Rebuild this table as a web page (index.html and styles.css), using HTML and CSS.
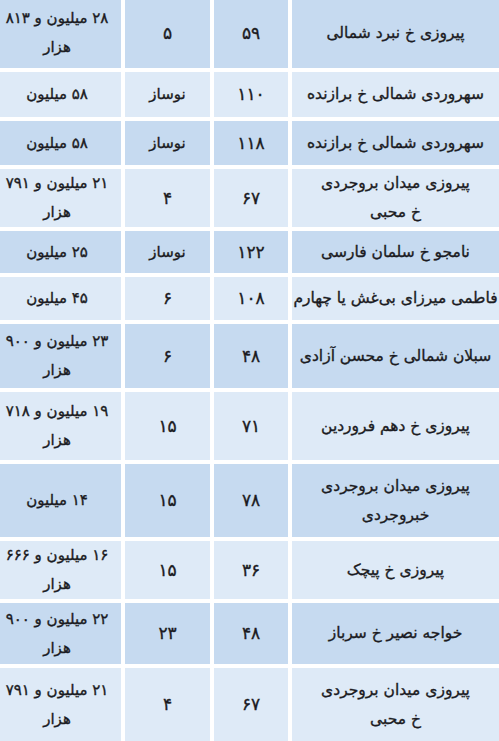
FILE: index.html
```html
<!DOCTYPE html>
<html lang="fa">
<head>
<meta charset="utf-8">
<title>جدول</title>
<link rel="stylesheet" href="styles.css">
</head>
<body>
<div class="table">
  <div class="cell addr dark">پیروزی خ نبرد شمالی</div><div class="cell num dark">۵۹</div><div class="cell num dark">۵</div><div class="cell dark">۲۸ میلیون و ۸۱۳<br>هزار</div>
  <div class="cell addr light">سهروردی شمالی خ برازنده</div><div class="cell num light">۱۱۰</div><div class="cell light">نوساز</div><div class="cell light">۵۸ میلیون</div>
  <div class="cell addr dark">سهروردی شمالی خ برازنده</div><div class="cell num dark">۱۱۸</div><div class="cell dark">نوساز</div><div class="cell dark">۵۸ میلیون</div>
  <div class="cell addr light">پیروزی میدان بروجردی<br>خ محبی</div><div class="cell num light">۶۷</div><div class="cell num light">۴</div><div class="cell light">۲۱ میلیون و ۷۹۱<br>هزار</div>
  <div class="cell addr dark">نامجو خ سلمان فارسی</div><div class="cell num dark">۱۲۲</div><div class="cell dark">نوساز</div><div class="cell dark">۲۵ میلیون</div>
  <div class="cell addr light">فاطمی میرزای بی‌غش یا چهارم</div><div class="cell num light">۱۰۸</div><div class="cell num light">۶</div><div class="cell light">۴۵ میلیون</div>
  <div class="cell addr dark">سبلان شمالی خ محسن آزادی</div><div class="cell num dark">۴۸</div><div class="cell num dark">۶</div><div class="cell dark">۲۳ میلیون و ۹۰۰<br>هزار</div>
  <div class="cell addr light">پیروزی خ دهم فروردین</div><div class="cell num light">۷۱</div><div class="cell num light">۱۵</div><div class="cell light">۱۹ میلیون و ۷۱۸<br>هزار</div>
  <div class="cell addr dark">پیروزی میدان بروجردی<br>خبروجردی</div><div class="cell num dark">۷۸</div><div class="cell num dark">۱۵</div><div class="cell dark">۱۴ میلیون</div>
  <div class="cell addr light">پیروزی خ پیچک</div><div class="cell num light">۳۶</div><div class="cell num light">۱۵</div><div class="cell light">۱۶ میلیون و ۶۶۶<br>هزار</div>
  <div class="cell addr dark">خواجه نصیر خ سرباز</div><div class="cell num dark">۴۸</div><div class="cell num dark">۲۳</div><div class="cell dark">۲۲ میلیون و ۹۰۰<br>هزار</div>
  <div class="cell addr light">پیروزی میدان بروجردی<br>خ محبی</div><div class="cell num light">۶۷</div><div class="cell num light">۴</div><div class="cell light">۲۱ میلیون و ۷۹۱<br>هزار</div>
</div>
</body>
</html>
```

FILE: styles.css
```css
html, body {
  margin: 0;
  padding: 0;
  background: #ffffff;
  overflow: hidden;
}

body {
  width: 499px;
  height: 741px;
}

.table {
  direction: rtl;
  display: grid;
  width: 506px;
  margin-left: -7px;
  margin-top: -2px;
  grid-template-columns: 207px 74px 85px 128px;
  grid-template-rows: 70px 45px 44px 58px 42px 43px 64px 68px 73px 58px 61px 73px;
  gap: 4px;
  font-family: "DejaVu Sans", sans-serif;
  font-size: 15px;
  line-height: 29px;
  color: #1b1b22;
  -webkit-text-stroke: 0.35px #1b1b22;
}

.cell {
  display: flex;
  align-items: center;
  justify-content: center;
  text-align: center;
  white-space: nowrap;
}

.addr {
  font-size: 15.5px;
}

.num {
  font-size: 17px;
}

.dark {
  background: #c6daf0;
}

.light {
  background: #deeaf7;
}
```
